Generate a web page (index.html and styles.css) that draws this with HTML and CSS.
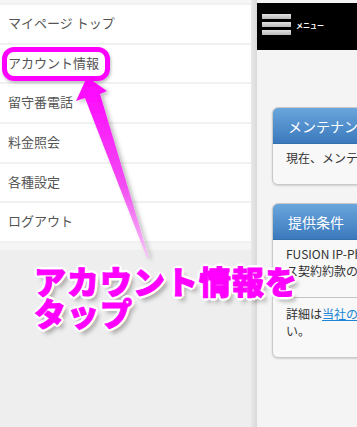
FILE: index.html
```html
<!DOCTYPE html>
<html lang="ja">
<head>
    <meta charset="UTF-8">
    <meta name="viewport" content="width=device-width, initial-scale=1.0">
    <title>アカウント情報</title>
    <link rel="stylesheet" href="styles.css">
</head>
<body>
    <div class="page">
        <div class="sidebar">
            <ul class="menu">
                <li>マイページ トップ</li>
                <li>アカウント情報</li>
                <li>留守番電話</li>
                <li>料金照会</li>
                <li>各種設定</li>
                <li>ログアウト</li>
            </ul>
            <div class="menu-foot"></div>
        </div>
        <div class="divider"></div>
        <div class="main">
            <div class="header">
                <div class="burger"><span></span><span></span><span></span></div>
                <span class="header-label">メニュー</span>
            </div>
            <div class="content">
                <div class="card">
                    <div class="card-head">メンテナンス情報</div>
                    <div class="card-section notice">現在、メンテナンス情報はありません。</div>
                </div>
                <div class="card">
                    <div class="card-head">提供条件</div>
                    <div class="card-section terms">FUSION IP-Phone SMARTの提供条件は、サービ<br>ス契約約款の定めによります。</div>
                    <div class="card-section details">詳細は<a href="#">当社のホームページ</a>をご覧くださ<br>い。</div>
                </div>
            </div>
        </div>
    </div>

    <div class="highlight"></div>
    <svg class="arrow" width="357" height="427" viewBox="0 0 357 427">
        <defs>
            <linearGradient id="arrowFill" x1="0" y1="0" x2="0" y2="1">
                <stop offset="0" stop-color="#ff00ff"/>
                <stop offset="0.6" stop-color="#f24cf2"/>
                <stop offset="1" stop-color="#f7c6f7"/>
            </linearGradient>
            <filter id="arrowShadow" x="-20%" y="-10%" width="160%" height="130%">
                <feDropShadow dx="3" dy="2" stdDeviation="2" flood-color="#000" flood-opacity="0.25"/>
            </filter>
        </defs>
        <polygon points="87,77 107,91 100,94 149,258 147,258 85,98 76,101" fill="url(#arrowFill)" filter="url(#arrowShadow)"/>
    </svg>
    <div class="caption">アカウント情報を<br>タップ</div>
</body>
</html>
```

FILE: styles.css
```css
body, html {
    margin: 0;
    padding: 0;
    width: 100%;
    height: 100%;
    overflow: hidden;
    background-color: #eee;
    font-family: "Noto Sans CJK JP", "Noto Sans", sans-serif;
}
.page {
    display: flex;
    height: 427px;
}
.sidebar {
    width: 251px;
    padding-top: 3px;
    background: linear-gradient(#f6f6f6 0, #f6f6f6 3px, #eee 3px);
}
.menu {
    list-style: none;
    margin: 0;
    padding: 0;
}
.menu li {
    box-sizing: border-box;
    height: 39.7px;
    border-top: 2px solid #f1f1f1;
    background-color: #fff;
    display: flex;
    align-items: center;
    padding: 0 0 3px 8px;
    font-size: 13px;
    color: #555;
}
.menu-foot {
    height: 7px;
    border-top: 2px solid #f1f1f1;
    background-color: #f5f5f5;
}
.divider {
    width: 6px;
    background: linear-gradient(to right, #e9e9e9, #d9d9d9);
}
.main {
    flex: 1;
    overflow: hidden;
    padding-top: 3px;
    background-color: #f4f4f4;
}
.header {
    height: 47px;
    background-color: #000;
    display: flex;
    align-items: flex-start;
    padding: 11px 0 0 5px;
    box-sizing: border-box;
}
.burger {
    display: flex;
    flex-direction: column;
    gap: 3px;
}
.burger span {
    display: block;
    width: 29px;
    height: 5px;
    background: linear-gradient(#e2e2e2, #b8b8b8);
}
.header-label {
    margin: 6px 0 0 5px;
    font-size: 7px;
    font-weight: bold;
    color: #fff;
}
.content {
    display: flex;
    flex-direction: column;
    align-items: flex-start;
    gap: 18px;
    padding: 57px 0 0 15px;
}
.card {
    width: 320px;
    flex-shrink: 0;
    border: 1px solid #c9c9c9;
    border-radius: 6px;
    background-color: #f8f8f8;
    box-shadow: 0 1px 2px rgba(0, 0, 0, 0.15);
    overflow: hidden;
}
.card-head {
    height: 35px;
    display: flex;
    align-items: center;
    padding-left: 15px;
    background: linear-gradient(#6aa6dc, #3a79bd);
    border-bottom: 1px solid #3670ad;
    color: #fff;
    font-size: 14px;
    white-space: nowrap;
}
.card-section {
    box-sizing: border-box;
    padding: 5px 13px 0;
    font-size: 12px;
    line-height: 17px;
    color: #333;
    white-space: nowrap;
}
.notice {
    height: 40px;
}
.terms {
    height: 57px;
}
.details {
    height: 60px;
    padding-top: 7px;
    border-top: 1px solid #c4c4c4;
}
.card-section a {
    color: #1d86d6;
    text-decoration: underline;
}

/* annotation overlay */
.highlight {
    position: absolute;
    left: 2px;
    top: 47px;
    width: 108px;
    height: 34px;
    box-sizing: border-box;
    border: 5px solid #ff00ff;
    border-radius: 12px;
    box-shadow: 1px 2px 3px rgba(0, 0, 0, 0.25);
}
.arrow {
    position: absolute;
    left: 0;
    top: 0;
    pointer-events: none;
}
.caption {
    position: absolute;
    left: 34px;
    top: 264px;
    font-size: 32px;
    line-height: 32px;
    letter-spacing: 1px;
    font-weight: 900;
    color: #ff00ff;
    -webkit-text-stroke: 1px #ff00ff;
    white-space: nowrap;
    text-shadow:
        2px 0 0 #fff, -2px 0 0 #fff, 0 2px 0 #fff, 0 -2px 0 #fff,
        2px 2px 0 #fff, -2px -2px 0 #fff, 2px -2px 0 #fff, -2px 2px 0 #fff,
        3px 0 0 #fff, 0 3px 0 #fff, -3px 0 0 #fff, 0 -3px 0 #fff,
        4px 5px 4px rgba(0, 0, 0, 0.3);
}
```
